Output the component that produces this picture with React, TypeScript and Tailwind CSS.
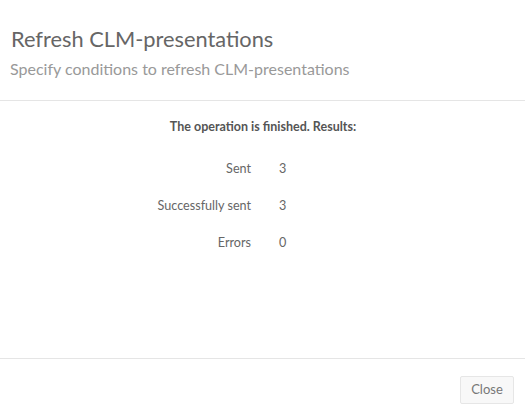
import React from "react";

const rows = [
  { label: "Sent", value: "3" },
  { label: "Successfully sent", value: "3" },
  { label: "Errors", value: "0" },
];

export default function App() {
  return (
    <div
      className="w-[525px] h-[413px] bg-white flex flex-col overflow-hidden"
      style={{ fontFamily: "Lato, 'Open Sans', sans-serif" }}
    >
      <div className="h-[101px] border-b border-[#e5e5e5] px-[10px] pt-[26px] shrink-0">
        <div className="text-[21.8px] leading-[26px] text-[#666] pl-[1px]">Refresh CLM-presentations</div>
        <div className="text-[16px] leading-[20px] mt-[7px] text-[#999]">
          Specify conditions to refresh CLM-presentations
        </div>
      </div>
      <div className="h-[257px] shrink-0 pt-[17px]">
        <div className="text-center text-[12.5px] leading-[18px] font-bold text-[#555] pl-[1px]">
          The operation is finished. Results:
        </div>
        <div className="flex flex-col mt-[24px] gap-[19px]">
          {rows.map((r) => (
            <div key={r.label} className="flex text-[12.6px] leading-[18px] text-[#666]">
              <div className="w-[251px] text-right">{r.label}</div>
              <div className="ml-[28px]">{r.value}</div>
            </div>
          ))}
        </div>
      </div>
      <div className="border-t border-[#e5e5e5] flex justify-end pt-[17px] pr-[11px]">
        <button className="w-[54px] h-[28px] bg-[#f8f8f8] border border-[#e6e6e6] rounded-[2px] text-[13px] text-[#777]">
          Close
        </button>
      </div>
    </div>
  );
}
